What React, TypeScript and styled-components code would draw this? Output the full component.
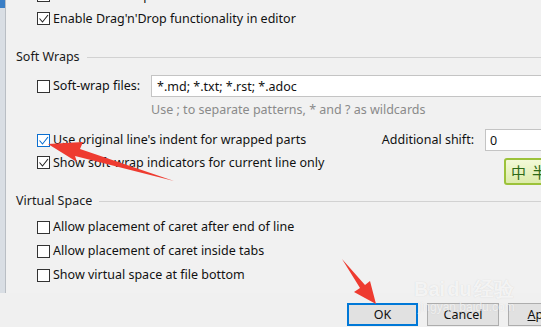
import styled, { createGlobalStyle } from "styled-components";

const GlobalStyle = createGlobalStyle`
  html, body {
    margin: 0;
    padding: 0;
    background: #f0f0f0;
  }
  body {
    font-family: "Noto Sans", "Liberation Sans", sans-serif;
    font-size: 12.5px;
    color: #111;
  }
`;

type CheckProps = {
  checked?: boolean;
  focused?: boolean;
};

const Check = ({ checked, focused }: CheckProps) => (
  <Box focused={focused}>
    {checked && (
      <svg width="11" height="11" viewBox="0 0 11 11">
        <polyline
          points="1.5,5.5 4.5,9 10,2"
          fill="none"
          stroke={focused ? "#0b6fd0" : "#222"}
          strokeWidth="1.1"
        />
      </svg>
    )}
  </Box>
);

const Option = ({
  label,
  checked,
  focused,
  h = 13,
}: CheckProps & { label: string; h?: number }) => (
  <CheckRow h={h}>
    <Check checked={checked} focused={focused} />
    <Label>{label}</Label>
  </CheckRow>
);

export default function App() {
  return (
    <>
      <GlobalStyle />
      <Page>
        <Panel>
          <LeftStrip />
          <Content>
            <Indent>
              <Spacer h={-11} />
              <Option label="Enable soft wraps in editor" />
              <Spacer h={10} />
              <Option label="Enable Drag'n'Drop functionality in editor" checked />
            </Indent>

            <Spacer h={24} />
            <Section title="Soft Wraps" />
            <Spacer h={10} />

            <Indent>
              <FilesGrid>
                <CheckRow h={22}>
                  <Check />
                  <Label>Soft-wrap files:</Label>
                </CheckRow>
                <TextInput>*.md; *.txt; *.rst; *.adoc</TextInput>
                <span />
                <Hint>Use ; to separate patterns, * and ? as wildcards</Hint>
              </FilesGrid>

              <Spacer h={12} />
              <CheckRow h={22}>
                <Check checked focused />
                <Label>Use original line's indent for wrapped parts</Label>
                <ShiftLabel>Additional shift:</ShiftLabel>
                <ShiftInput>0</ShiftInput>
              </CheckRow>
              <Spacer h={5} />
              <Option label="Show soft-wrap indicators for current line only" checked />
            </Indent>

            <Spacer h={24} />
            <Section title="Virtual Space" />
            <Spacer h={6} />

            <Indent>
              <Option label="Allow placement of caret after end of line" h={24} />
              <Option label="Allow placement of caret inside tabs" h={24} />
              <Option label="Show virtual space at file bottom" h={24} />
            </Indent>
          </Content>
        </Panel>

        <ButtonBar>
          <Button primary>OK</Button>
          <Button>Cancel</Button>
          <Button>
            <u>A</u>pply
          </Button>
        </ButtonBar>

        <Ime>
          <span>中</span>
          <span>半</span>
        </Ime>

        <Watermark>
          <WmLogo>
            Bai<WmDu>du</WmDu>经验
          </WmLogo>
          <WmUrl>jingyan.baidu.com</WmUrl>
        </Watermark>

        <Arrows width="541" height="327" viewBox="0 0 541 327">
          <polygon
            points="48,144 83,142 80,149 174,181 75,156 77,162"
            fill="#ee3b30"
          />
          <polygon
            points="376,304 354,292 360,288 342,259 365,285 370,281"
            fill="#ee3b30"
          />
        </Arrows>
      </Page>
    </>
  );
}

const Section = ({ title }: { title: string }) => (
  <SectionHead>
    <SectionTitle>{title}</SectionTitle>
    <SectionLine />
  </SectionHead>
);

const Page = styled.div`
  position: relative;
  width: 541px;
  height: 327px;
  overflow: hidden;
  background: #f0f0f0;
  display: flex;
  flex-direction: column;
`;

const Panel = styled.div`
  height: 293px;
  display: flex;
  flex-shrink: 0;
  background: #f1f1f1;
`;

const LeftStrip = styled.div`
  width: 5px;
  border-right: 1px solid #b9bec4;
  background: linear-gradient(#3b7fc6 0, #3b7fc6 8px, #d9dee4 8px);
`;

const Content = styled.div`
  flex: 1;
  padding-left: 10px;
  overflow: hidden;
  display: flex;
  flex-direction: column;
`;

const Indent = styled.div`
  padding-left: 21px;
  display: flex;
  flex-direction: column;
`;

const Spacer = styled.div<{ h: number }>`
  flex-shrink: 0;
  height: ${({ h }) => (h > 0 ? `${h}px` : "0")};
  margin-top: ${({ h }) => (h < 0 ? `${h}px` : "0")};
`;

const CheckRow = styled.div<{ h: number }>`
  height: ${({ h }) => h}px;
  display: flex;
  align-items: center;
  flex-shrink: 0;
  white-space: nowrap;
`;

const Box = styled.span<{ focused?: boolean }>`
  box-sizing: border-box;
  width: 13px;
  height: 13px;
  flex-shrink: 0;
  border: 1px solid ${({ focused }) => (focused ? "#0b6fd0" : "#333")};
  background: #fff;
  display: flex;
  align-items: center;
  justify-content: center;
`;

const Label = styled.span`
  margin-left: 3px;
  line-height: 16px;
  color: #111;
`;

const SectionHead = styled.div`
  height: 16px;
  display: flex;
  align-items: center;
  gap: 7px;
  flex-shrink: 0;
`;

const SectionTitle = styled.span`
  line-height: 16px;
  color: #1a1a1a;
  white-space: nowrap;
`;

const SectionLine = styled.div`
  flex: 1;
  height: 1px;
  background: #d2d2d2;
`;

const FilesGrid = styled.div`
  display: grid;
  grid-template-columns: auto 1fr;
  column-gap: 11px;
  row-gap: 6px;
  margin-right: -40px;
`;

const TextInput = styled.div`
  box-sizing: border-box;
  height: 22px;
  border: 1px solid #c4c4c4;
  background: #fff;
  padding-left: 5px;
  display: flex;
  align-items: center;
  white-space: nowrap;
`;

const Hint = styled.div`
  color: #8a8a8a;
  line-height: 14px;
  white-space: nowrap;
`;

const ShiftLabel = styled.span`
  margin-left: auto;
  padding-left: 20px;
  margin-right: 11px;
  line-height: 16px;
`;

const ShiftInput = styled(TextInput)`
  width: 80px;
  margin-right: -24px;
  padding-left: 4px;
`;

const ButtonBar = styled.div`
  flex: 1;
  display: flex;
  gap: 9px;
  padding: 10px 0 0 347px;
  overflow: hidden;
`;

const Button = styled.div<{ primary?: boolean }>`
  box-sizing: border-box;
  flex-shrink: 0;
  width: ${({ primary }) => (primary ? 71 : 72)}px;
  height: 23px;
  background: #e1e1e1;
  border: ${({ primary }) =>
    primary ? "2px solid #0078d7" : "1px solid #adadad"};
  display: flex;
  align-items: center;
  justify-content: center;
  font-size: 12.5px;
  color: #111;
`;

const Ime = styled.div`
  position: absolute;
  left: 504px;
  top: 158px;
  width: 50px;
  height: 27px;
  box-sizing: border-box;
  border: 2px solid #9cc23a;
  border-radius: 3px;
  background: linear-gradient(#f3f9d8, #dcebaa);
  display: flex;
  align-items: center;
  gap: 6px;
  padding-left: 5px;
  font-family: "Noto Sans CJK SC", sans-serif;
  font-size: 15px;
  color: #2e6a17;
`;

const Watermark = styled.div`
  position: absolute;
  left: 414px;
  top: 278px;
  display: flex;
  flex-direction: column;
  align-items: flex-start;
  pointer-events: none;
`;

const WmLogo = styled.div`
  font-family: "Liberation Sans", sans-serif;
  font-weight: bold;
  font-size: 20px;
  line-height: 22px;
  color: rgba(255, 255, 255, 0.75);
  text-shadow: 0 0 1px rgba(150, 150, 150, 0.35);
  white-space: nowrap;
`;

const WmDu = styled.span`
  margin: 0 2px;
`;

const WmUrl = styled.div`
  font-family: "Liberation Sans", sans-serif;
  font-size: 12px;
  line-height: 14px;
  color: rgba(255, 255, 255, 0.7);
  text-shadow: 0 0 1px rgba(150, 150, 150, 0.3);
  margin-left: 4px;
`;

const Arrows = styled.svg`
  position: absolute;
  left: 0;
  top: 0;
  pointer-events: none;
`;
